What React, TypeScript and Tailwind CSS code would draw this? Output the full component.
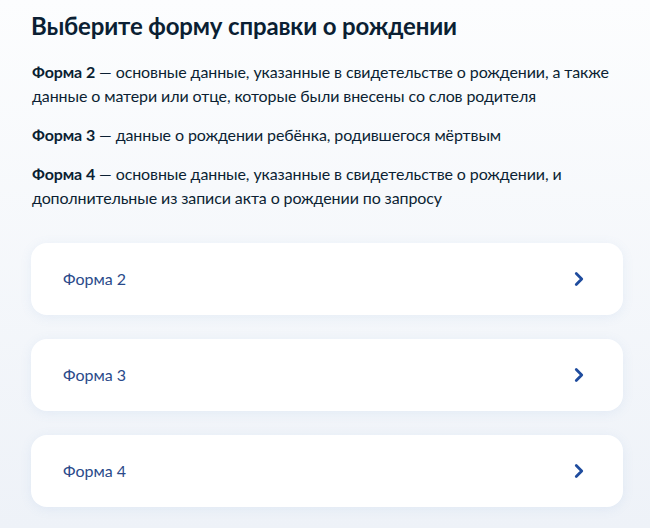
import { ChevronRight } from "lucide-react";

const descriptions = [
  {
    title: "Форма 2",
    text: "основные данные, указанные в свидетельстве о рождении, а также данные о матери или отце, которые были внесены со слов родителя",
  },
  {
    title: "Форма 3",
    text: "данные о рождении ребёнка, родившегося мёртвым",
  },
  {
    title: "Форма 4",
    text: "основные данные, указанные в свидетельстве о рождении, и дополнительные из записи акта о рождении по запросу",
  },
];

const forms = ["Форма 2", "Форма 3", "Форма 4"];

export default function App() {
  return (
    <div
      className="w-[650px] h-[528px] overflow-hidden bg-gradient-to-b from-[#fcfdfe] to-[#eef2f8] text-[#0b1f33]"
      style={{ fontFamily: "Lato, 'Noto Sans', sans-serif" }}
    >
      <div className="pl-[31px] pr-[27px] pt-[8px]">
        <h1 className="text-[24px] leading-[36px] font-bold tracking-[-0.15px]">
          Выберите форму справки о рождении
        </h1>

        <div className="mt-[16px] flex flex-col gap-[15px]">
          {descriptions.map((d) => (
            <p key={d.title} className="text-[16px] leading-[24px] pl-[1px] tracking-[-0.1px]">
              <span className="font-bold">{d.title}</span> — {d.text}
            </p>
          ))}
        </div>

        <div className="mt-[33px] flex flex-col gap-[24px]">
          {forms.map((f) => (
            <button
              key={f}
              className="h-[72px] w-[592px] flex items-center justify-between rounded-[16px] bg-white pl-[32px] pr-[33px] shadow-[0_2px_12px_rgba(102,150,210,0.10)] text-left"
            >
              <span className="text-[16px] text-[#2a4a8a]">{f}</span>
              <ChevronRight className="w-[22px] h-[22px] text-[#1f4c9e]" strokeWidth={3} />
            </button>
          ))}
        </div>
      </div>
    </div>
  );
}
